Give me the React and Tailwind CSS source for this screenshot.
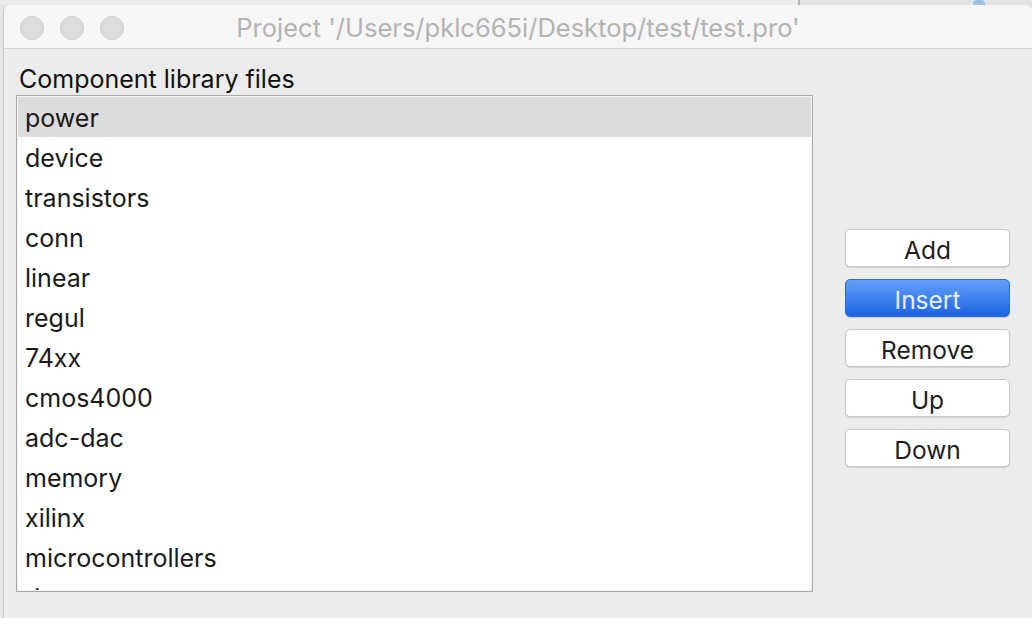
import React, { useState } from "react";

const libs = [
  "power",
  "device",
  "transistors",
  "conn",
  "linear",
  "regul",
  "74xx",
  "cmos4000",
  "adc-dac",
  "memory",
  "xilinx",
  "microcontrollers",
  "dsp",
];

const buttons = ["Add", "Insert", "Remove", "Up", "Down"];

const TrafficLight = () => (
  <div className="w-[24px] h-[24px] rounded-full bg-[#dddddd] border border-[#d0d0d0]" />
);

export default function App() {
  const [selected, setSelected] = useState(0);

  return (
    <div
      className="w-[1032px] h-[618px] overflow-hidden flex flex-col bg-[#e6e6e6]"
      style={{ fontFamily: '"Inter", "Liberation Sans", sans-serif' }}
    >
      {/* whatever is behind the window */}
      <div className="h-[5px] flex shrink-0">
        <div className="w-[798px] bg-[#ececec]" />
        <div className="w-[2px] bg-[#b8b8b8]" />
        <div className="w-[173px] bg-[#e4e4e4]" />
        <div className="w-[12px] rounded-t-[4px] bg-[#9cc3e6]" />
        <div className="flex-1 bg-[#e4e4e4]" />
      </div>

      <div className="flex-1 flex flex-col ml-[3px] bg-[#ececec] border-l border-[#c9c9c9] rounded-t-[7px] overflow-hidden">
        {/* title bar */}
        <div className="h-[44px] shrink-0 flex items-center pt-[3px] bg-[#f6f6f6] border-b border-[#d3d3d3] relative">
          <div className="flex items-center gap-[16px] pl-[16px]">
            <TrafficLight />
            <TrafficLight />
            <TrafficLight />
          </div>
          <div className="absolute inset-0 pt-[4px] flex items-center justify-center text-[25.5px] text-[#b3b3b3] pointer-events-none">
            Project '/Users/pklc665i/Desktop/test/test.pro'
          </div>
        </div>

        {/* content */}
        <div className="flex-1 flex">
          <div className="flex flex-col pl-[12px] pt-[16px]">
            <div className="text-[25px] leading-[28px] text-[#111] pl-[3px]">
              Component library files
            </div>
            <div className="mt-[2px] w-[797px] h-[497px] border border-[#a9a9a9] p-[1px] bg-[#f2f2f2] overflow-hidden">
              <div className="h-full bg-white overflow-hidden">
                {libs.map((name, i) => (
                  <div
                    key={name}
                    onClick={() => setSelected(i)}
                    className={
                      "h-[40px] flex items-center pt-[3px] pl-[7px] text-[25px] text-[#1a1a1a] " +
                      (selected === i ? "bg-[#dcdcdc]" : "bg-white")
                    }
                  >
                    {name}
                  </div>
                ))}
              </div>
            </div>
          </div>

          <div className="flex flex-col gap-[12px] pl-[32px] pt-[180px]">
            {buttons.map((b) => (
              <button
                key={b}
                className={
                  b === "Insert"
                    ? "w-[165px] h-[38px] rounded-[5px] pt-[2px] text-[24.5px] text-[#e8f0ff] bg-gradient-to-b from-[#62a0f8] to-[#1c63e0] border border-[#2a6be0] shadow-[0_1px_1px_rgba(0,0,0,0.15)]"
                    : "w-[165px] h-[38px] rounded-[5px] pt-[2px] text-[24.5px] text-[#1e1e1e] bg-white border border-[#c8c8c8] shadow-[0_1px_1px_rgba(0,0,0,0.12)]"
                }
              >
                {b}
              </button>
            ))}
          </div>
        </div>
      </div>
    </div>
  );
}
